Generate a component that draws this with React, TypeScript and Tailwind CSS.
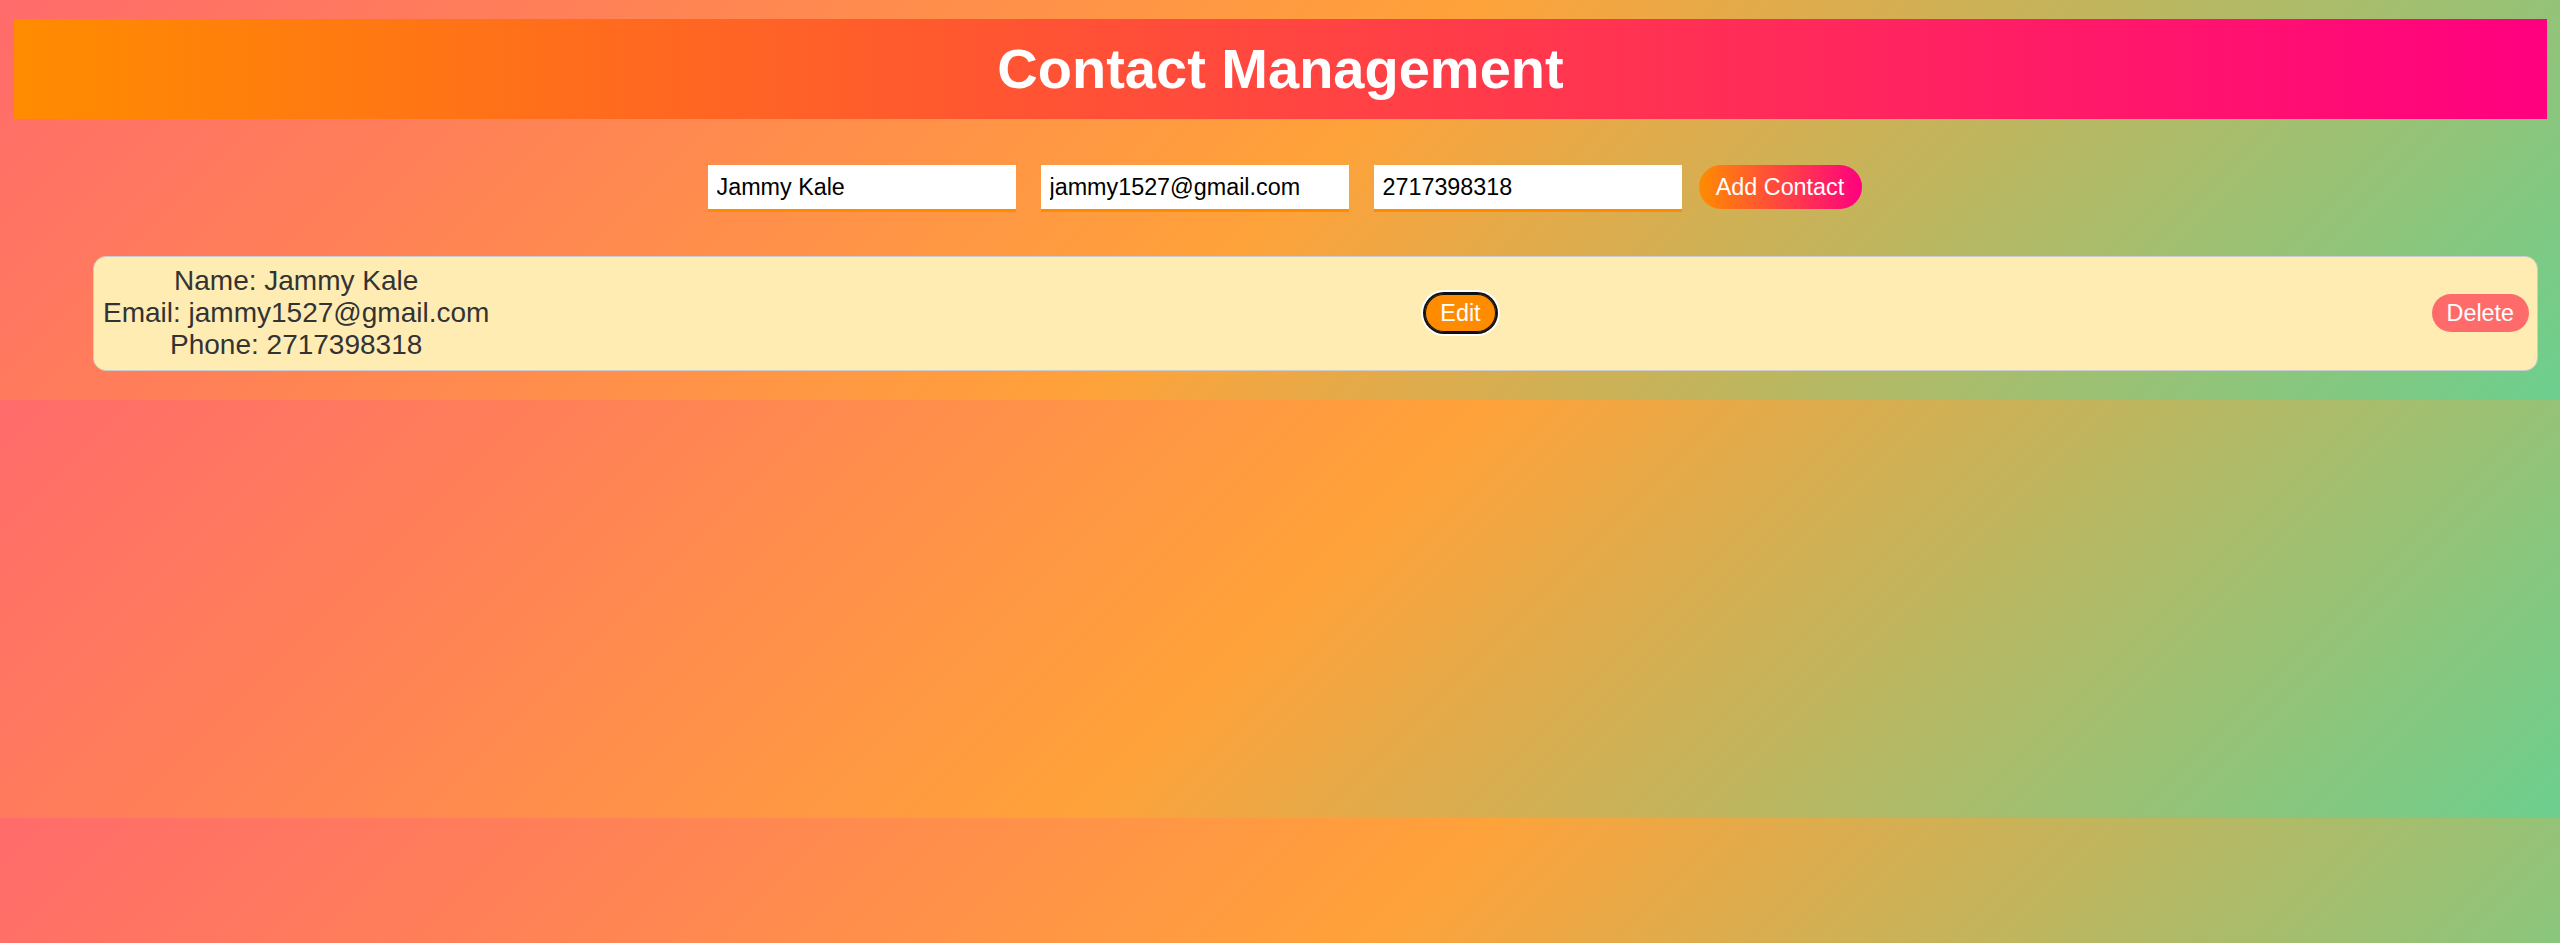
const contact = {
  name: 'Jammy Kale',
  email: 'jammy1527@gmail.com',
  phone: '2717398318',
}

export default function App() {
  return (
    <div className="min-h-screen bg-[linear-gradient(135deg,#ff6b6b,#ffa23a,#6ccf8e)] bg-[length:100%_418px] bg-[position:0_400px] bg-repeat font-['Liberation_Sans',Arial,sans-serif]">
      <div className="h-[400px] pt-[19px] bg-[linear-gradient(135deg,#ff6b6b,#ffa23a,#6ccf8e)]">
        {/* Header */}
        <header className="ml-[14px] mr-[13px] h-[100px] flex items-center justify-center bg-[linear-gradient(to_right,#ff8c00,#ff0080)]">
          <h1 className="text-[56px] font-bold text-white">Contact Management</h1>
        </header>

        {/* Form */}
        <div className="mt-[46px] flex justify-center pl-[9px]">
          <input
            defaultValue={contact.name}
            className="w-[308px] h-[47px] px-[9px] bg-white border-0 border-b-[3px] border-[#ff8c00] text-[23.33px] text-black outline-none"
          />
          <input
            defaultValue={contact.email}
            className="ml-[25px] w-[308px] h-[47px] px-[9px] bg-white border-0 border-b-[3px] border-[#ff8c00] text-[23.33px] text-black outline-none"
          />
          <input
            defaultValue={contact.phone}
            className="ml-[25px] w-[308px] h-[47px] px-[9px] bg-white border-0 border-b-[3px] border-[#ff8c00] text-[23.33px] text-black outline-none"
          />
          <button className="ml-[17px] w-[163px] h-[44px] rounded-full bg-[linear-gradient(to_right,#ff8c00,#ff0080)] text-white text-[23.33px]">
            Add Contact
          </button>
        </div>

        {/* Contact list */}
        <div className="mt-[44px] ml-[93px] mr-[22px] flex items-center justify-between p-[8px] pl-[9px] bg-[#ffecb3] border border-[#cccccc] rounded-[13px]">
          <div className="text-center text-[28px] leading-[32.2px] text-[#333]">
            <div>Name: {contact.name}</div>
            <div>Email: {contact.email}</div>
            <div>Phone: {contact.phone}</div>
          </div>
          <button className="h-[38px] px-[15px] rounded-full bg-[#ff8c00] text-white text-[23.33px] shadow-[inset_0_0_0_1px_#101010,0_0_0_2px_#101010,0_0_0_4px_#ffffff]">
            Edit
          </button>
          <button className="h-[38px] px-[15px] rounded-full bg-[#ff6b6b] text-white text-[23.33px]">
            Delete
          </button>
        </div>
      </div>
    </div>
  )
}
